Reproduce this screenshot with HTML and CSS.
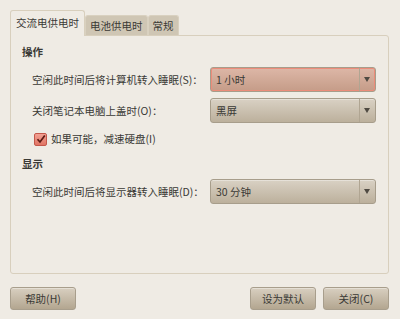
FILE: index.html
```html
<!DOCTYPE html>
<html lang="zh-CN">
<head>
  <meta charset="UTF-8">
  <title>电源管理首选项</title>
  <link rel="stylesheet" href="styles.css">
</head>
<body>
  <div class="dialog">
    <div class="tabs">
      <div class="tab active">交流电供电时</div>
      <div class="tab">电池供电时</div>
      <div class="tab">常规</div>
    </div>
    <div class="panel">
      <div class="heading">操作</div>
      <div class="row first">
        <span class="label">空闲此时间后将计算机转入睡眠(S)：</span>
        <div class="combo focus"><span>1 小时</span><i class="arrow"></i></div>
      </div>
      <div class="row">
        <span class="label">关闭笔记本电脑上盖时(O)：</span>
        <div class="combo"><span>黑屏</span><i class="arrow"></i></div>
      </div>
      <label class="check">
        <span class="box">
          <svg width="10" height="10" viewBox="0 0 10 10"><path d="M1.5 5.2 L4 8 L8.8 1.5" fill="none" stroke="#5a1a12" stroke-width="1.7"/></svg>
        </span>
        如果可能，减速硬盘(I)
      </label>
      <div class="heading second">显示</div>
      <div class="row first">
        <span class="label">空闲此时间后将显示器转入睡眠(D)：</span>
        <div class="combo"><span>30 分钟</span><i class="arrow"></i></div>
      </div>
    </div>
    <div class="buttons">
      <button class="btn">帮助(H)</button>
      <div class="spacer"></div>
      <button class="btn">设为默认</button>
      <button class="btn">关闭(C)</button>
    </div>
  </div>
</body>
</html>
```

FILE: styles.css
```css
body {
  margin: 0;
  background: #efebe4;
  font-family: "Noto Sans CJK SC", "Noto Sans", sans-serif;
  font-size: 10.5px;
  color: #3a3935;
}
.dialog {
  width: 400px;
  height: 319px;
  box-sizing: border-box;
  padding: 10px 11px 0 10px;
}
.tabs {
  display: flex;
  align-items: flex-end;
  height: 25px;
}
.tab {
  height: 20px;
  line-height: 19px;
  padding: 0 4px;
  white-space: nowrap;
  background: #cfc6b4;
  border: 1px solid #d9d1c0;
  border-bottom: none;
  border-radius: 3px 3px 0 0;
  box-sizing: border-box;
}
.tab.active {
  height: 26px;
  line-height: 24px;
  padding: 0 5px;
  background: #efebe4;
  border-color: #d8cfbd;
  position: relative;
  z-index: 1;
  margin-bottom: -1px;
}
.panel {
  border: 1px solid #d8cfbd;
  border-radius: 0 3px 3px 3px;
  height: 239px;
  box-sizing: border-box;
  padding: 8px 12px 0 11px;
}
.heading {
  font-weight: bold;
  line-height: 16px;
}
.heading.second {
  margin-top: 9px;
}
.row {
  display: flex;
  align-items: center;
  margin-top: 6px;
}
.row.first {
  margin-top: 7px;
}
.label {
  width: 188px;
  padding-left: 10px;
  box-sizing: border-box;
  white-space: nowrap;
}
.combo {
  width: 166px;
  height: 25px;
  box-sizing: border-box;
  border: 1px solid #a79d8b;
  border-radius: 3px;
  background: linear-gradient(#d9d1c4, #bcb09c);
  display: flex;
  align-items: center;
  padding-left: 5px;
  box-shadow: inset 0 1px 0 rgba(255,255,255,0.35);
}
.combo span {
  flex: 1;
}
.combo.focus {
  background: linear-gradient(#ddb7a7, #c59c88);
  box-shadow: inset 0 0 0 1px #ec8c7a;
}
.arrow {
  width: 15px;
  height: 100%;
  border-left: 1px solid #b0a592;
  position: relative;
}
.arrow::after {
  content: "";
  position: absolute;
  left: 4px;
  top: 9px;
  border-left: 3px solid transparent;
  border-right: 3px solid transparent;
  border-top: 5px solid #4f4a42;
}
.check {
  display: flex;
  align-items: center;
  gap: 4px;
  margin-top: 8px;
  padding-left: 12px;
  line-height: 16px;
}
.box {
  width: 11px;
  height: 11px;
  border: 1px solid #c4574a;
  border-radius: 2px;
  background: linear-gradient(#f2a194, #e07463);
  display: flex;
  align-items: center;
  justify-content: center;
}
.buttons {
  display: flex;
  gap: 7px;
  margin-top: 13px;
}
.spacer {
  flex: 1;
}
.btn {
  font-family: inherit;
  font-size: 10.5px;
  color: #3a3935;
  height: 23px;
  width: 66px;
  border: 1px solid #a89e8c;
  border-radius: 3px;
  background: linear-gradient(#d8cfc0, #b3a690);
  box-shadow: inset 0 1px 0 rgba(255,255,255,0.35);
  padding: 0;
}
```
